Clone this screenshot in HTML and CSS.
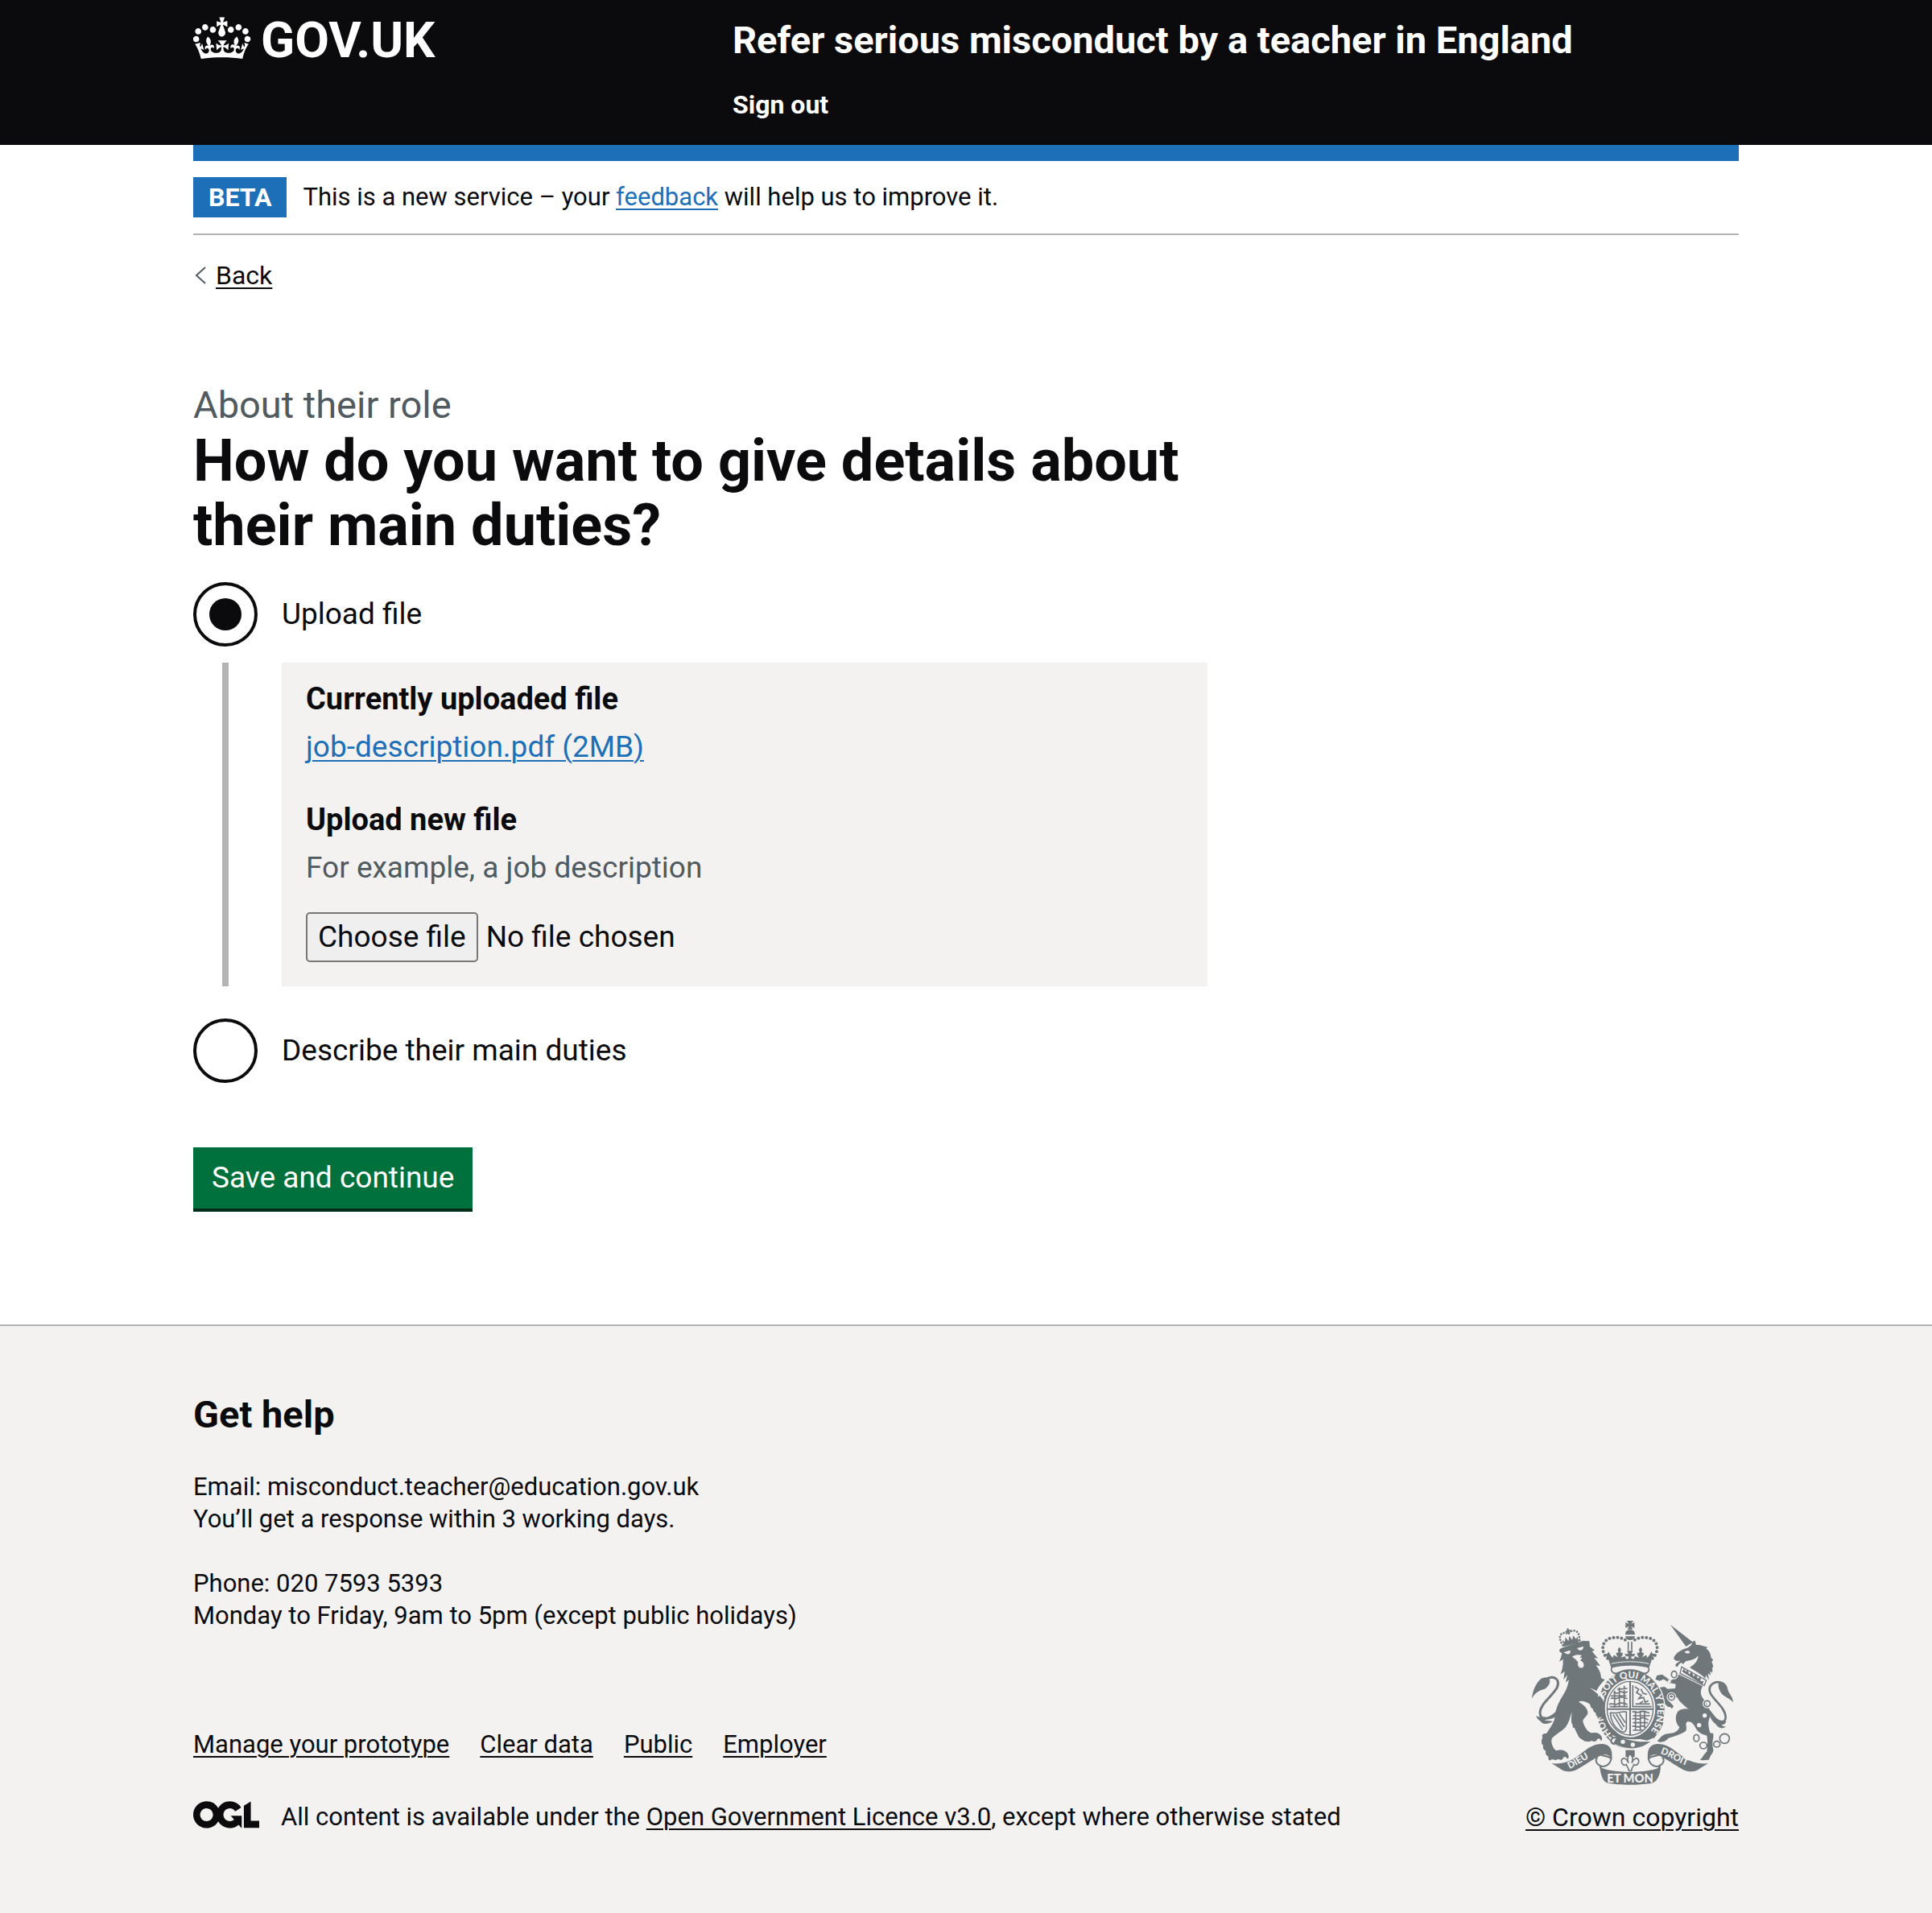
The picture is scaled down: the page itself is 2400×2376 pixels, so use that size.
FILE: index.html
```html
<!DOCTYPE html>
<html lang="en-GB">
<head>
<meta charset="utf-8">
<meta name="viewport" content="width=device-width, initial-scale=1">
<title>How do you want to give details about their main duties?</title>
<link rel="stylesheet" href="styles.css">
</head>
<body>
<header class="header">
  <div class="container header-grid">
    <a class="logo" href="#">
      <svg class="logo-crown" viewBox="0 0 36 32" aria-hidden="true"><path fill="currentColor" fill-rule="evenodd" d="M6.7 12.2c1 .4 2.1-.1 2.5-1s-.1-2.1-1-2.5c-1-.4-2.1.1-2.5 1-.4 1 0 2.1 1 2.5m-4.3 2.5c1 .4 2.1-.1 2.5-1s-.1-2.1-1-2.5c-1-.4-2.1.1-2.5 1-.5 1 0 2.1 1 2.5m-1.3 4.8c1 .4 2.1-.1 2.5-1s-.1-2.1-1-2.5c-1-.4-2.1.1-2.5 1-.4 1 0 2.1 1 2.5m10.4-5.8c1 .4 2.1-.1 2.5-1s-.1-2.1-1-2.5c-1-.4-2.1.1-2.5 1s0 2.1 1 2.5m17.4-1.5c-1 .4-2.1-.1-2.5-1s.1-2.1 1-2.5c1-.4 2.1.1 2.5 1 .5 1 0 2.1-1 2.5m4.3 2.5c-1 .4-2.1-.1-2.5-1s.1-2.1 1-2.5c1-.4 2.1.1 2.5 1 .5 1 0 2.1-1 2.5m1.3 4.8c-1 .4-2.1-.1-2.5-1s.1-2.1 1-2.5c1-.4 2.1.1 2.5 1 .4 1 0 2.1-1 2.5m-10.4-5.8c-1 .4-2.1-.1-2.5-1s.1-2.1 1-2.5c1-.4 2.1.1 2.5 1s0 2.1-1 2.5m-5.3-4.8 2.4 1.3V6.5l-2.4.8c-.1-.1-.1-.1-.2-.1s1-3 1-3h-3.4l1 3c-.1.1-.2.1-.2.1-.1.1-2.4-.7-2.4-.7v3.5L17 8.8c-.1.1 0 .2.1.3l-1.4 4.2c-.1.2-.1.4-.1.7 0 1.1.8 2.1 1.9 2.2h.6C19.2 16 20 15.1 20 14c0-.2 0-.4-.1-.7l-1.4-4.2c.2-.1.3-.2.3-.3m-1 20.3c4.6 0 8.9.3 12.8.9 1.1-4.6 2.4-7.2 3.8-9.1l-2.6-.9c.3 1.3.3 1.9 0 2.8-.4-.4-.8-1.2-1.1-2.4l-1.2 4.2c.8-.5 1.4-.9 2-.9-1.2 2.6-2.7 3.2-3.6 3-1.2-.2-1.7-1.3-1.5-2.2.3-1.3 1.6-1.6 2.2-.1 1.2-2.4-.8-3.1-2.1-2.4 1.9-1.9 2.2-3.6.6-5.7-2.2 1.7-2.2 3.3-1.2 5.6-1.3-1.5-3.3-.7-2.5 1.7.9-1.4 2.1-.5 2 .8-.2 1.2-1.7 2.1-3.7 2-2.8-.2-3-2.2-3-3.7.7-.1 1.9.5 3 2l.4-4.4c-1.1 1.2-2.2 1.4-3.3 1.4.4-1.2 2.1-3.1 2.1-3.1h-5.5s1.8 1.9 2.1 3.1c-1.1 0-2.2-.3-3.3-1.4l.4 4.4c1.1-1.5 2.3-2.1 3-2-.1 1.6-.2 3.5-3 3.7-1.9.2-3.5-.8-3.7-2-.2-1.3 1-2.2 1.9-.8.7-2.3-1.2-3.1-2.5-1.7 1-2.3 1-4-1.2-5.6-1.6 2.1-1.3 3.7.6 5.7-1.3-.7-3.2.1-2.1 2.4.6-1.5 1.9-1.1 2.2.1.2.9-.4 1.9-1.5 2.2-1 .2-2.4-.5-3.6-3 .6 0 1.2.3 2 .9l-1.2-4.2c-.3 1.2-.7 2-1.1 2.4-.3-.9-.2-1.4 0-2.8L1.1 20.9c1.4 1.9 2.6 4.5 3.8 9.1 3.9-.6 8.2-.9 12.9-.9"/></svg>
      <span class="logo-text">GOV.UK</span>
    </a>
    <div class="header-content">
      <a class="service-name" href="#">Refer serious misconduct by a teacher in England</a>
      <nav class="header-nav"><a href="#">Sign out</a></nav>
    </div>
  </div>
</header>

<div class="container">
  <div class="brand-bar"></div>
  <div class="phase-banner">
    <strong class="tag">BETA</strong>
    <span>This is a new service – your <a class="link" href="#">feedback</a> will help us to improve it.</span>
  </div>
  <a class="back-link" href="#">
    <svg class="back-arrow" viewBox="0 0 14 22" aria-hidden="true"><path d="M13 1 2 11l11 10" fill="none" stroke="#505a5f" stroke-width="2"/></svg>
    <span class="back-text">Back</span>
  </a>

  <main class="main">
    <form class="form" action="#">
      <p class="caption">About their role</p>
      <h1 class="title" id="question">How do you want to give details about their main duties?</h1>
      <div role="radiogroup" aria-labelledby="question">
        <div class="radio">
          <input class="radio-input" type="radio" name="duties" id="duties-upload" checked>
          <label for="duties-upload">Upload file</label>
        </div>
        <div class="conditional">
          <div class="panel">
            <h2 class="panel-title">Currently uploaded file</h2>
            <p class="panel-text"><a class="link" href="#">job-description.pdf (2MB)</a></p>
            <label class="panel-title panel-next" for="new-file">Upload new file</label>
            <p class="panel-text hint" id="file-hint">For example, a job description</p>
            <div class="file">
              <button class="file-button" type="button" onclick="document.getElementById('new-file').click()">Choose file</button>
              <span>No file chosen</span>
              <input class="file-input" type="file" id="new-file" aria-describedby="file-hint" tabindex="-1">
            </div>
          </div>
        </div>
        <div class="radio">
          <input class="radio-input" type="radio" name="duties" id="duties-describe">
          <label for="duties-describe">Describe their main duties</label>
        </div>
      </div>
      <button class="button" type="submit">Save and continue</button>
    </form>
  </main>
</div>

<footer class="footer">
  <div class="container footer-row">
    <div class="footer-main">
      <h2 class="footer-title">Get help</h2>
      <p class="footer-text">Email: misconduct.teacher@education.gov.uk<br>You’ll get a response within 3 working days.</p>
      <p class="footer-text">Phone: 020 7593 5393<br>Monday to Friday, 9am to 5pm (except public holidays)</p>
      <nav class="footer-links">
        <a href="#">Manage your prototype</a>
        <a href="#">Clear data</a>
        <a href="#">Public</a>
        <a href="#">Employer</a>
      </nav>
      <div class="licence">
        <svg class="ogl" viewBox="0 0 483 196" aria-hidden="true"><path fill="currentColor" d="M421.5 142.8V.1l-50.7 32.3v161.1h112.4v-50.7zm-122.3-9.6A47.12 47.12 0 0 1 221 97.8c0-26 21.1-47.1 47.1-47.1 16.7 0 31.4 8.7 39.7 21.8l42.7-27.2A97.63 97.63 0 0 0 268.1 0c-36.5 0-68.3 20.1-85.1 49.7A98 98 0 0 0 97.8 0C43.9 0 0 43.9 0 97.8s43.9 97.8 97.8 97.8c36.5 0 68.3-20.1 85.1-49.7a97.76 97.76 0 0 0 149.6 25.4l19.4 22.2h3v-87.8h-80l24.3 27.5zM97.8 145c-26 0-47.1-21.1-47.1-47.1s21.1-47.1 47.1-47.1 47.1 21.1 47.1 47.1S123.8 145 97.8 145"/></svg>
        <span>All content is available under the <a href="#">Open Government Licence v3.0</a>, except where otherwise stated</span>
      </div>
    </div>
    <a class="copyright" href="#">
      <svg class="crest" viewBox="72 66 750 612" aria-hidden="true">
        <defs>
          <path id="motto" d="M368 487A103 119 0 1 1 506 487"/>
          <path id="dieu" d="M212 618C242 606 280 574 322 562"/>
          <path id="droit" d="M550 561C586 570 622 602 676 614"/>
          <g id="ribbon">
            <path d="M146 598C190 600 215 592 250 565C285 535 310 523 337 525C366 528 374 552 369 580C360 564 345 562 330 568C300 580 270 605 240 620C215 632 190 630 174 615Z"/>
            <path d="M368 572C368 596 350 612 332 608C312 603 306 586 316 574M368 580C355 568 338 572 330 566M324 602C326 612 330 620 336 626" fill="none" stroke-width="6"/>
          </g>
          <g id="halfcrown">
            <path d="M354 206C326 182 330 134 374 129C394 126 410 130 424 140" fill="none" stroke-width="12" stroke-linecap="round" stroke-dasharray="0 15"/>
            <path d="M344 188C352 192 356 188 357 180C364 192 368 202 376 204C372 198 376 192 382 196C384 198 388 202 392 200C388 196 384 190 388 184C392 188 394 184 394 180C390 176 392 170 398 164C404 170 406 176 402 180C402 186 406 188 410 184C412 192 408 198 404 202C412 204 416 196 420 200C424 206 420 212 428 212C432 208 434 204 431 198C424 202 420 196 418 188C424 190 430 190 431 188C430 184 426 180 426 178H438V232C412 230 388 234 370 240C366 222 356 206 344 188Z"/>
          </g>
        </defs>
        <g fill="#6f777b" stroke="#6f777b" stroke-width="0">
          <!-- lion -->
          <path d="M178 170L188 166L262 141L286 142L288 162L306 176L296 180L318 206L304 204L327 234L310 232C322 246 330 262 330 280L344 286C330 300 314 318 312 334C326 342 340 352 343 366L344 408C350 420 340 432 334 422C326 432 320 420 316 424C308 418 314 410 308 408C298 404 302 394 296 392C288 388 292 378 286 376C272 366 256 362 246 368C270 382 282 396 280 412C276 424 262 430 262 442C268 462 278 478 292 484C306 482 322 480 332 498C336 510 330 518 326 508C320 502 316 506 312 514C304 520 300 512 292 514C284 520 276 514 270 516C262 510 252 506 246 498C240 484 234 474 230 464C226 468 222 462 224 454C216 446 220 426 220 406C214 430 208 450 196 464C180 480 152 494 146 506C142 520 150 540 162 550C176 546 196 546 206 562C212 574 208 584 202 578C196 570 190 572 186 582C180 588 174 580 168 582C160 588 152 582 146 582C138 592 130 582 134 572C126 570 120 560 124 550C114 548 112 538 114 530C104 524 108 508 112 500C106 492 114 484 126 486C136 470 150 452 156 434C158 400 170 372 184 350C198 330 206 310 210 286L198 296L204 268L190 286L194 254C186 262 182 262 178 266C188 244 188 226 188 210L174 218C180 206 182 198 184 186C176 184 170 178 178 170Z"/>
          <path d="M186 161L254 139" stroke-width="4"/>
          <path d="M72 356C74 330 84 306 98 290C108 278 124 274 136 282C144 294 134 312 120 320C100 326 84 332 72 356Z"/>
          <path d="M128 282C156 268 180 286 164 318C144 350 104 376 102 408C102 424 110 432 124 428" fill="none" stroke-width="9"/>
          <path d="M88 420C100 428 110 424 122 426C140 424 152 414 166 400L160 424C146 434 130 434 118 436C132 440 142 438 150 442C132 452 112 454 104 440C96 436 90 430 88 420Z"/>
          <g transform="rotate(-14 213 130)">
            <path d="M182 150C166 112 190 96 212 114C232 96 260 112 244 150" fill="none" stroke-width="8" stroke-linecap="round" stroke-dasharray="0 11"/>
            <path d="M184 132L192 140L198 124L206 140L213 122L220 140L228 124L234 140L242 132L240 156H186ZM210 94H217V101H224V107H217V116H210V107H203V101H210Z"/>
          </g>
          <!-- unicorn -->
          <path d="M588 81L672 146L646 162Z"/>
          <path d="M601 208C600 194 622 176 642 170C656 166 664 160 668 152C670 144 676 138 680 142L684 156C700 154 714 162 726 164L722 170C736 180 738 192 740 204L748 212L742 218L748 236L744 242C746 250 744 256 744 260L736 254L738 270L728 262L732 288L720 268L718 282C704 264 676 252 660 240C672 232 690 222 692 196C680 212 662 214 648 216C642 218 640 224 634 228L630 222L622 226L614 238C606 236 604 230 612 224L626 214C614 218 606 216 601 208Z"/>
          <path d="M630 238L722 288L714 308L624 262Z" fill="#f3f2f1" stroke-width="4"/>
          <path d="M632 256L638 244L646 256L652 248L658 266L668 254L674 274L684 264L690 282L702 272L700 292L712 290L708 304Z"/>
          <path d="M620 266L708 310C702 322 698 334 706 350C722 372 738 396 736 424C726 444 730 462 736 484L748 486V500C744 516 744 532 748 546C750 558 736 566 732 584C722 584 710 588 698 584C708 578 712 562 724 554C726 534 728 516 724 494C708 490 692 484 682 466C676 450 664 440 652 442C640 448 652 464 646 476C628 490 600 496 580 504C574 512 566 518 552 518L534 518C546 510 552 494 570 488L600 484C612 478 620 472 622 462C606 448 604 420 616 404C628 394 648 392 656 396C640 382 622 370 614 352L584 352L578 360L600 384L594 394L586 386L580 388L566 374L550 342L552 328L544 316L566 312L578 320L606 318L608 302L588 298C580 300 572 286 562 284L548 290L532 284L538 270L556 266C572 274 580 286 592 288Z"/>
          <path d="M768 298C786 288 800 306 802 322C806 340 820 346 822 370C806 352 786 350 776 334C770 322 764 310 768 298Z"/>
          <path d="M784 300C756 284 726 306 736 334C748 362 794 390 794 426C794 450 768 446 750 424L722 388" fill="none" stroke-width="8"/>
          <path d="M732 402C744 430 764 444 796 440C794 450 786 454 778 454C784 460 792 462 796 460C782 472 766 466 756 450C742 440 734 424 732 402Z"/>
          <g fill="none" stroke-width="5">
            <g stroke="#f3f2f1" stroke-width="12"><ellipse cx="602" cy="266" rx="10" ry="12"/><circle cx="592" cy="350" r="12"/><circle cx="725" cy="375" r="11"/></g>
            <ellipse cx="602" cy="266" rx="10" ry="12"/><circle cx="592" cy="350" r="12"/><circle cx="725" cy="375" r="11"/>
            <ellipse cx="685" cy="503" rx="10" ry="13"/><ellipse cx="711" cy="531" rx="13" ry="12"/><ellipse cx="761" cy="526" rx="12" ry="11"/><circle cx="790" cy="505" r="18"/>
          </g>
          <g fill="#f3f2f1"><circle cx="716" cy="419" r="8"/><circle cx="695" cy="455" r="8"/><circle cx="584" cy="292" r="6"/></g>
          <!-- garter and shield -->
          <ellipse cx="440" cy="397" rx="130" ry="151" fill="#f3f2f1"/>
          <ellipse cx="440" cy="397" rx="126" ry="147"/>
          <ellipse cx="438" cy="392" rx="94" ry="108" fill="#f3f2f1"/>
          <ellipse cx="438" cy="392" rx="86" ry="100" fill="none" stroke-width="4"/>
          <path d="M438 294V494M352 395H524" stroke-width="6"/>
          <g fill="none" stroke-width="5">
            <path d="M376 336C384 330 388 340 396 334S410 330 416 336L428 330M366 356C376 350 384 360 392 354S410 350 428 356M360 378C370 370 382 382 392 376S414 372 428 378M380 326V390M398 314V388M416 308V388M366 346L424 346M362 386H430M390 322L428 318"/>
            <path d="M448 306V386H518M456 312L470 322L462 334L480 344L470 356L488 352L494 370L506 364M478 320L486 336L500 340M474 374L486 366M458 376H512"/>
            <path d="M446 406C458 402 464 412 474 406S492 404 510 410M446 432C458 426 468 438 478 430S494 430 506 436M446 460C456 454 466 466 476 460S488 460 496 464M458 402V474M476 402V476M492 404V466M448 420H512M448 446H504M448 474H488"/>
            <path d="M364 408C388 416 408 400 424 406V470C420 482 410 484 400 476C378 462 366 440 364 408M374 416L410 472M386 414L416 462M398 412L420 446"/>
          </g>
          <path d="M330 462C360 500 430 520 520 500L548 520C500 560 420 556 372 520Z" fill="#f3f2f1"/>
          <path d="M390 496C420 510 460 520 514 516C470 550 420 548 376 522Z"/>
          <path d="M462 504C500 498 540 470 552 440L562 446C548 484 528 506 500 512Z"/>
          <path d="M324 440C330 466 346 490 364 500L384 478C370 468 358 454 352 438Z"/>
          <path d="M386 480C364 482 362 494 374 502C362 512 366 524 382 526M374 502H394" fill="none" stroke-width="6"/>
          <g fill="#f3f2f1"><circle cx="411" cy="517" r="8"/><circle cx="448" cy="528" r="8"/></g>
          <g class="crest-text" fill="#f3f2f1">
            <text><textPath href="#motto">HON<tspan dx="66">SOIT QUI MAL Y PENSE</tspan></textPath></text>
          </g>
          <path d="M288 316C312 334 336 352 340 370L342 350C334 336 310 326 288 316Z" fill="#f3f2f1"/>
          <path d="M296 338C322 344 344 362 344 408C350 420 340 432 334 422C326 432 320 420 316 424C308 418 314 410 308 408Z"/>
          <!-- crown -->
          <use href="#halfcrown"/>
          <use href="#halfcrown" transform="matrix(-1 0 0 1 875 0)"/>
          <path d="M426 66H450L442 78L454 72V94L442 86L448 98H428L434 86L421 94V72L433 78Z"/>
          <path d="M420 118C420 104 428 100 438 100S456 104 456 118ZM420 124H456C454 134 448 138 438 138S422 134 420 124Z"/>
          <path d="M431 144V176M444 144V176" stroke-width="5"/>
          <path d="M372 236C362 250 372 264 388 262C420 246 456 246 488 262C504 264 514 250 504 236C464 226 410 226 372 236Z" fill="#f3f2f1" stroke-width="5"/>
          <path d="M358 214C402 206 472 206 518 214L508 242C464 230 410 230 368 242Z"/>
          <path d="M368 226C410 216 464 216 508 226" fill="none" stroke="#f3f2f1" stroke-width="3"/>
          <!-- ribbons -->
          <use href="#ribbon"/>
          <use href="#ribbon" transform="matrix(-1 0 0 1 874 0)"/>
          <path d="M325 610C356 636 518 636 552 610C550 640 540 662 524 670C480 680 396 680 350 670C336 662 328 640 325 610Z"/>
          <path d="M421 548H455V574H421Z"/>
          <path d="M438 560C450 574 450 584 444 596C450 580 464 572 470 586C472 600 460 608 452 602C450 610 446 612 444 618C448 628 428 628 432 618C430 612 426 610 424 602C416 608 404 600 406 586C412 572 426 580 432 596C426 584 426 574 438 560Z" fill="#f3f2f1" stroke-width="5"/>
          <g class="crest-text" fill="#f3f2f1">
            <text class="crest-large" x="438" y="668" text-anchor="middle">ET MON</text>
            <text><textPath href="#dieu">DIEU</textPath></text>
            <text><textPath href="#droit">DROIT</textPath></text>
          </g>
          <!-- lion's face -->
          <path d="M190 184L214 176C218 186 212 192 202 190ZM240 168L264 162C264 172 258 178 248 176ZM222 200C232 192 246 190 258 196L250 204H260L252 214C264 218 270 232 262 240C252 246 240 236 244 220L232 208ZM650 178C656 176 662 180 660 186C652 190 644 186 640 182Z" fill="#f3f2f1"/>
        </g>
      </svg>
      <span class="copyright-text">© Crown copyright</span>
    </a>
  </div>
</footer>
</body>
</html>
```
FILE: styles.css
```css
*, *::before, *::after { box-sizing: border-box; }

body {
  margin: 0;
  background: #fff;
  color: #0b0b0d;
  font-family: Roboto, "Liberation Sans", sans-serif;
  font-size: 31px;
  line-height: 40px;
}

h1, h2, p { margin: 0; }

a {
  color: inherit;
  text-decoration-thickness: 2px;
  text-underline-offset: 4px;
}

button {
  font: inherit;
  cursor: pointer;
}

.link { color: #1d70b8; }

.container {
  max-width: 1920px;
  margin: 0 auto;
}

/* Header */
.header {
  background: #0b0b0d;
  color: #fff;
  padding: 13px 0 30px;
}

.header a { text-decoration: none; }

.header-grid {
  display: grid;
  grid-template-columns: 1fr 2fr;
  gap: 45px;
}

.logo {
  display: flex;
  align-items: flex-start;
  gap: 12px;
}

.logo-crown {
  width: 72px;
  height: 64px;
}

.logo-text {
  font-size: 62px;
  font-weight: 700;
  line-height: 74px;
}

.header-content { padding-top: 12px; }

.service-name {
  display: block;
  font-size: 47px;
  font-weight: 700;
  line-height: 50px;
}

.header-nav {
  margin-top: 35px;
  font-size: 32px;
  font-weight: 700;
}

/* Phase banner */
.brand-bar {
  height: 20px;
  background: #1d70b8;
}

.phase-banner {
  display: flex;
  align-items: center;
  gap: 20px;
  padding: 20px 0;
  border-bottom: 2px solid #b3b3b3;
}

.tag {
  padding: 0 19px;
  background: #1d70b8;
  color: #fff;
  font-size: 32px;
  font-weight: 700;
  line-height: 50px;
}

.back-link {
  display: inline-flex;
  align-items: center;
  gap: 12px;
  margin-top: 30px;
  padding-left: 2px;
  text-decoration: none;
}

.back-arrow {
  width: 14px;
  height: 22px;
}

.back-text {
  font-size: 32px;
  text-decoration: underline;
  text-decoration-thickness: 2px;
  text-underline-offset: 4px;
}

/* Question page */
.main {
  display: grid;
  grid-template-columns: 2fr 1fr;
  gap: 30px;
  padding: 110px 0 140px;
}

.form {
  font-size: 37px;
  line-height: 50px;
}

.caption {
  color: #505a5f;
  font-size: 47px;
  line-height: 60px;
}

.title {
  margin-bottom: 30px;
  font-size: 72px;
  font-weight: 700;
  line-height: 80px;
}

.radio {
  display: flex;
  align-items: center;
  gap: 30px;
}

.radio-input {
  appearance: none;
  display: grid;
  place-items: center;
  flex: none;
  width: 80px;
  height: 80px;
  margin: 0;
  border: 4px solid #0b0b0d;
  border-radius: 50%;
  background: #fff;
}

.radio-input:checked::before {
  content: "";
  width: 40px;
  height: 40px;
  border-radius: 50%;
  background: #0b0b0d;
}

.conditional {
  margin: 20px 0 40px 36px;
  padding-left: 66px;
  border-left: 8px solid #b3b3b3;
}

.panel {
  padding: 20px 30px 30px;
  background: #f3f2f1;
}

.panel-title {
  display: block;
  font-size: 38px;
  font-weight: 700;
  line-height: 50px;
}

.panel-next { margin-top: 40px; }

.panel-text { margin-top: 10px; }

.hint { color: #505a5f; }

.file {
  position: relative;
  display: flex;
  align-items: center;
  gap: 10px;
  margin-top: 30px;
}

.file-button {
  height: 62px;
  padding: 0 13px;
  border: 2px solid #767676;
  border-radius: 5px;
  background: #efefef;
  color: #0b0b0d;
}

.file-input {
  position: absolute;
  width: 1px;
  height: 1px;
  opacity: 0;
  pointer-events: none;
}

.button {
  display: block;
  height: 76px;
  margin: 80px 0 4px;
  padding: 0 23px;
  border: 0;
  background: #00703c;
  box-shadow: 0 4px 0 #002d18;
  color: #fff;
}

/* Footer */
.footer {
  padding: 80px 0 100px;
  border-top: 2px solid #b3b3b3;
  background: #f3f2f1;
}

.footer-row {
  display: flex;
  align-items: flex-end;
  justify-content: space-between;
}

.footer-title {
  font-size: 47px;
  font-weight: 700;
  line-height: 60px;
}

.footer-text { margin-top: 40px; }

.footer-links {
  display: flex;
  gap: 38px;
  margin-top: 120px;
}

.licence {
  display: flex;
  align-items: flex-start;
  gap: 27px;
  margin-top: 50px;
}

.ogl {
  width: 82px;
  height: 34px;
}

.copyright {
  display: flex;
  flex-direction: column;
  align-items: center;
  gap: 20px;
  text-decoration: none;
}

.crest {
  width: 250px;
  height: 204px;
}

.crest-text {
  font-family: Lato, sans-serif;
  font-size: 35px;
  font-weight: 900;
}

.crest-large { font-size: 44px; }

.copyright-text {
  font-size: 32px;
  text-decoration: underline;
  text-decoration-thickness: 2px;
  text-underline-offset: 4px;
}
```
